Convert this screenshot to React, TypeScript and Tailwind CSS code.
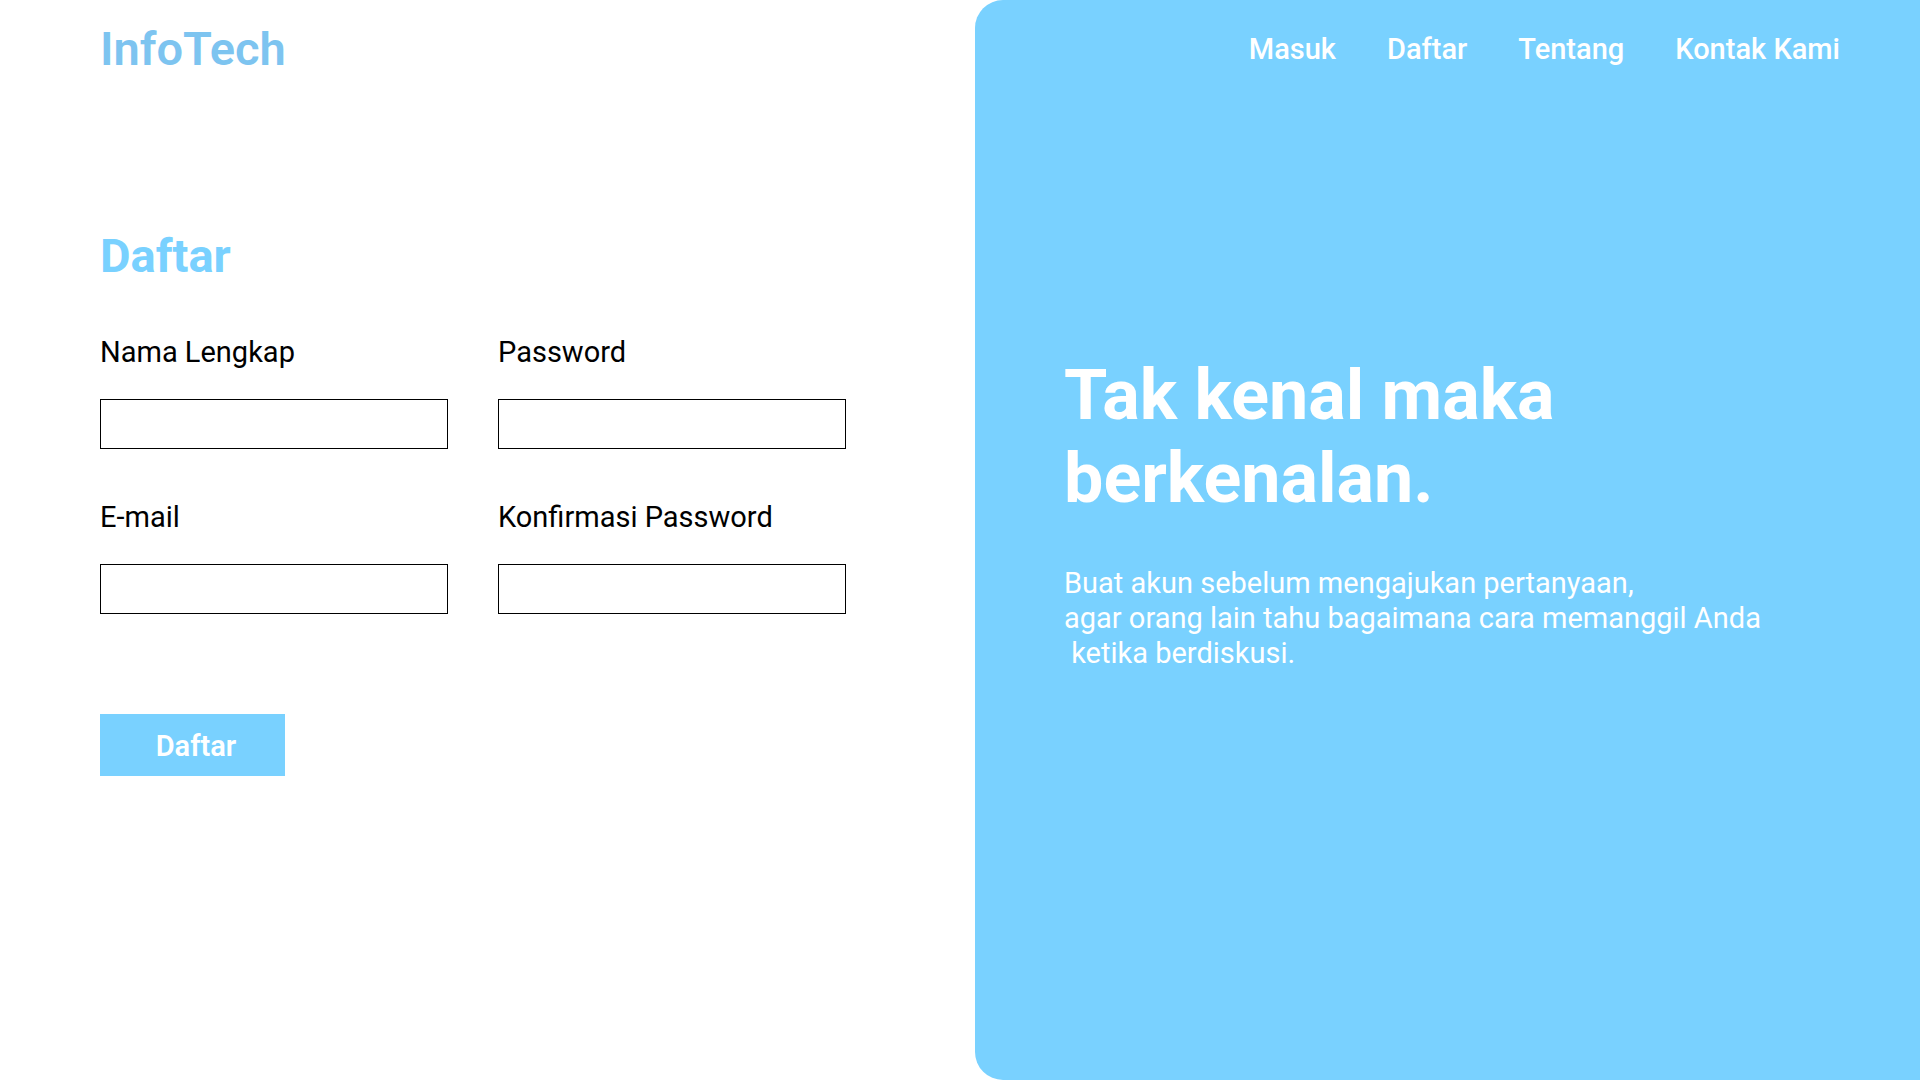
import React from 'react';

const NAV_LINKS = ['Masuk', 'Daftar', 'Tentang', 'Kontak Kami'];

const FIELDS = [
  { id: 'nama', label: 'Nama Lengkap', type: 'text' },
  { id: 'password', label: 'Password', type: 'password' },
  { id: 'email', label: 'E-mail', type: 'email' },
  { id: 'konfirmasi', label: 'Konfirmasi Password', type: 'password' },
];

const Field: React.FC<{ id: string; label: string; type: string }> = ({ id, label, type }) => (
  <div className="flex flex-col">
    <label htmlFor={id} className="text-[29px] leading-none text-black">
      {label}
    </label>
    <input
      id={id}
      type={type}
      className="mt-[32px] h-[50px] w-[348px] border border-black bg-white px-3 text-[20px] outline-none"
    />
  </div>
);

const App: React.FC = () => {
  return (
    <div className="flex h-screen w-screen overflow-hidden bg-white font-['Roboto',sans-serif]">
      {/* Left: form */}
      <div className="flex w-[975px] shrink-0 flex-col pl-[100px]">
        <header className="flex h-[96px] items-center">
          <span className="text-[47px] font-semibold leading-none text-[#7dc4f0]">InfoTech</span>
        </header>

        <h1 className="mt-[136px] text-[47px] font-bold leading-none text-[#79d1ff]">Daftar</h1>

        <form className="mt-[59px] flex flex-col" onSubmit={e => e.preventDefault()}>
          <div className="grid grid-cols-[348px_348px] gap-x-[50px] gap-y-[54px]">
            {FIELDS.map(f => (
              <Field key={f.id} {...f} />
            ))}
          </div>

          <button
            type="submit"
            className="mt-[100px] h-[62px] w-[185px] bg-[#79d1ff] pl-[7px] pt-[4px] text-[29px] font-semibold text-white"
          >
            Daftar
          </button>
        </form>
      </div>

      {/* Right: hero panel */}
      <div className="flex flex-1 flex-col rounded-l-[28px] bg-[#79d1ff]">
        <nav className="flex h-[96px] items-center justify-end gap-[51px] pr-[80px] pt-[2px]">
          {NAV_LINKS.map(link => (
            <a key={link} href="#" className="text-[29px] font-medium leading-none text-white">
              {link}
            </a>
          ))}
        </nav>

        <div className="pl-[89px]">
          <h2 className="mt-[258px] text-[70px] font-bold leading-[83px] text-white">
            Tak kenal maka
            <br />
            berkenalan.
          </h2>
          <p className="mt-[46px] text-[29px] leading-[35px] text-white">
            Buat akun sebelum mengajukan pertanyaan,
            <br />
            agar orang lain tahu bagaimana cara memanggil Anda
            <br />
            {'\u00a0'}ketika berdiskusi.
          </p>
        </div>
      </div>
    </div>
  );
};

export default App;
